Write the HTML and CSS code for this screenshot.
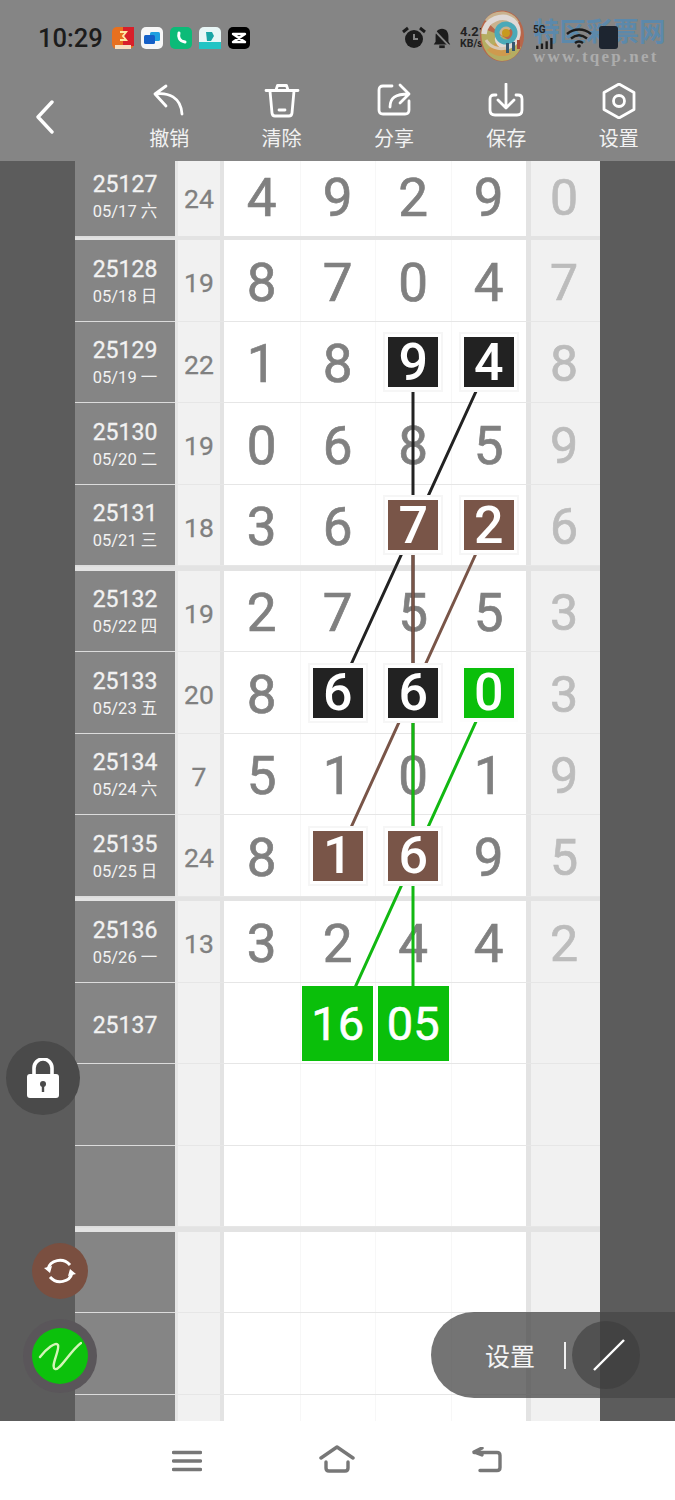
FILE: index.html
```html
<!DOCTYPE html>
<html lang="zh">
<head>
<meta charset="utf-8">
<title>走势图</title>
<link rel="stylesheet" href="styles.css">
</head>
<body>
<div class="screen">
  <header class="header">
    <div class="status">
      <span class="time">10:29</span>
      <div class="apps">
        <svg class="app" viewBox="0 0 22 22"><rect width="22" height="22" rx="5" fill="#e8701e"/><rect x="11" width="11" height="19" fill="#d81f2a"/><rect x="3" y="18" width="16" height="4" fill="#f7e0c0"/><path d="M8 5h6l-3 4 3 4H8" fill="none" stroke="#ffe9a0" stroke-width="2"/></svg>
        <svg class="app" viewBox="0 0 22 22"><rect width="22" height="22" rx="5" fill="#f7f7f7"/><rect x="9" y="5" width="10" height="9" rx="1.5" fill="#1fa0e0"/><rect x="3" y="8" width="11" height="9" rx="1.5" fill="#1560c8"/></svg>
        <svg class="app" viewBox="0 0 22 22"><rect width="22" height="22" rx="5" fill="#0cbb78"/><path d="M9 6c-1 4 0 8 6 9" fill="none" stroke="#fff" stroke-width="3" stroke-linecap="round"/></svg>
        <svg class="app" viewBox="0 0 22 22"><rect width="22" height="22" rx="5" fill="#e8f6f6"/><rect y="15" width="22" height="7" fill="#22c4c4"/><path d="M7 5h6l2 4-3 5H8z" fill="#1aa5a5"/></svg>
        <svg class="app" viewBox="0 0 22 22"><rect width="22" height="22" rx="5" fill="#000"/><path d="M5 7l12 8H5l12-8z" fill="none" stroke="#fff" stroke-width="2.4" stroke-linejoin="round"/></svg>
      </div>
      <div class="sys">
        <svg class="sys-alarm" viewBox="0 0 24 24"><circle cx="12" cy="13" r="9" fill="#1c1c1c"/><path d="M1 6l5-4M23 6l-5-4" stroke="#1c1c1c" stroke-width="3"/><path d="M12 8v5h4" fill="none" stroke="#858585" stroke-width="2"/></svg>
        <svg class="sys-bell" viewBox="0 0 24 24"><path d="M12 2c5 0 7 4 7 8v6l2 3H3l2-3v-6c0-4 2-8 7-8z" fill="#1c1c1c"/><rect x="9" y="20" width="6" height="3" fill="#1c1c1c"/><path d="M3 3l18 19" stroke="#858585" stroke-width="2"/></svg>
        <span class="speed"><b>4.21</b><small>KB/s</small></span>
        <span class="net"><small>5G</small>
          <svg class="signal" viewBox="0 0 26 14"><path d="M1 10h3v4H1zM7 7h3v7H7zM13 4h3v10h-3zM19 0h3v14h-3z" fill="#1c1c1c"/></svg>
        </span>
        <svg class="wifi" viewBox="0 0 26 20"><path d="M1 6c7-6 17-6 24 0M5 10.500c5-4 11-4 16 0M9 15c2.500-2 5.500-2 8 0" fill="none" stroke="#1c1c1c" stroke-width="2.400"/><circle cx="13" cy="18" r="1.800" fill="#1c1c1c"/></svg>
        <span class="battery"></span>
      </div>
    </div>
    <nav class="toolbar">
      <a class="back"><svg viewBox="0 0 20 34" class="back-icon"><path d="M17 2L3 17l14 15" fill="none" stroke="#fff" stroke-width="3.400" stroke-linecap="round" stroke-linejoin="round"/></svg></a>
      <a class="tool">
        <svg class="tool-icon" viewBox="0 0 36 36"><path d="M15 3L4 11l11 12M4 11c13-2 26 3 27 20" /></svg>
        <span>撤销</span>
      </a>
      <a class="tool">
        <svg class="tool-icon" viewBox="0 0 36 36"><path d="M2 7.500h32M12 7l1.500-4.500h9L24 7M6 8l2 22q.3 3 3 3h14q2.700 0 3-3l2-22M15 27h6"/></svg>
        <span>清除</span>
      </a>
      <a class="tool">
        <svg class="tool-icon" viewBox="0 0 36 36"><path d="M16 3H7Q3 3 3 7v20q0 4 4 4h22q4 0 4-4v-9M14 24c0-9 5-13 19-13M24 2l9 9-9 9"/></svg>
        <span>分享</span>
      </a>
      <a class="tool">
        <svg class="tool-icon" viewBox="0 0 36 36"><path d="M8 12H6q-4 0-4 4v11q0 5 5 5h22q5 0 5-5V16q0-4-4-4h-2M18 1v23M10 17l8 8 8-8"/></svg>
        <span>保存</span>
      </a>
      <a class="tool">
        <svg class="tool-icon" viewBox="0 0 36 36"><path d="M18 1l15 8.500v17L18 35 3 26.500v-17z"/><circle cx="18" cy="18" r="5.500"/></svg>
        <span>设置</span>
      </a>
    </nav>
    <div class="watermark">
      <svg class="wm-logo" viewBox="0 0 46 52">
        <ellipse cx="23" cy="26" rx="22" ry="25.500" fill="#b8664a"/>
        <path d="M6 10C14-2 34-1 40 12L23 26z" fill="#c9b28e"/>
        <path d="M3 18C0 34 8 50 23 51c9 0 16-6 19-14L23 26z" fill="#b5ad62"/>
        <path d="M8 40c6 6 16 8 24 4L23 28z" fill="#cf9a4e"/>
        <path d="M5 24C6 9 24 3 34 11c8 7 6 22-4 25-8 2-14-5-10-11" fill="none" stroke="#dfd9d6" stroke-width="5.500"/>
        <path d="M7 30c4 7 12 10 20 8" fill="none" stroke="#d8c8b4" stroke-width="3"/>
        <circle cx="27" cy="23" r="9" fill="none" stroke="#4aa9b8" stroke-width="5"/>
        <circle cx="27" cy="23" r="4" fill="#c79a1e"/>
        <path d="M27 33h3v10h-3zM33 32h3v9h-3z" fill="#37566f"/>
        <path d="M38 30h3v9h-3z" fill="#a84a3a"/>
      </svg>
      <div class="wm-text">
        <span class="wm-name">特区彩票网</span>
        <span class="wm-url">www.tqep.net</span>
      </div>
    </div>
  </header>

  <main class="main">
    <div class="gutter"></div>
    <div class="board">
      <div class="group">
        <div class="row row-partial">
          <div class="issue"><b>25127</b><small>05/17 六</small></div><div class="sum">24</div><div class="sep"></div>
          <div class="cell">4</div><div class="cell">9</div><div class="cell">2</div><div class="cell">9</div><div class="sep sep-r"></div><div class="last">0</div>
        </div>
      </div>
      <div class="group">
        <div class="row">
          <div class="issue"><b>25128</b><small>05/18 日</small></div><div class="sum">19</div><div class="sep"></div>
          <div class="cell">8</div><div class="cell">7</div><div class="cell">0</div><div class="cell">4</div><div class="sep sep-r"></div><div class="last">7</div>
        </div>
        <div class="row">
          <div class="issue"><b>25129</b><small>05/19 一</small></div><div class="sum">22</div><div class="sep"></div>
          <div class="cell">1</div><div class="cell">8</div><div class="cell"><span class="tile black">9</span></div><div class="cell"><span class="tile black">4</span></div><div class="sep sep-r"></div><div class="last">8</div>
        </div>
        <div class="row">
          <div class="issue"><b>25130</b><small>05/20 二</small></div><div class="sum">19</div><div class="sep"></div>
          <div class="cell">0</div><div class="cell">6</div><div class="cell">8</div><div class="cell">5</div><div class="sep sep-r"></div><div class="last">9</div>
        </div>
        <div class="row">
          <div class="issue"><b>25131</b><small>05/21 三</small></div><div class="sum">18</div><div class="sep"></div>
          <div class="cell">3</div><div class="cell">6</div><div class="cell"><span class="tile brown">7</span></div><div class="cell"><span class="tile brown">2</span></div><div class="sep sep-r"></div><div class="last">6</div>
        </div>
      </div>
      <div class="group">
        <div class="row">
          <div class="issue"><b>25132</b><small>05/22 四</small></div><div class="sum">19</div><div class="sep"></div>
          <div class="cell">2</div><div class="cell">7</div><div class="cell">5</div><div class="cell">5</div><div class="sep sep-r"></div><div class="last">3</div>
        </div>
        <div class="row">
          <div class="issue"><b>25133</b><small>05/23 五</small></div><div class="sum">20</div><div class="sep"></div>
          <div class="cell">8</div><div class="cell"><span class="tile black">6</span></div><div class="cell"><span class="tile black">6</span></div><div class="cell"><span class="tile green">0</span></div><div class="sep sep-r"></div><div class="last">3</div>
        </div>
        <div class="row">
          <div class="issue"><b>25134</b><small>05/24 六</small></div><div class="sum">7</div><div class="sep"></div>
          <div class="cell">5</div><div class="cell">1</div><div class="cell">0</div><div class="cell">1</div><div class="sep sep-r"></div><div class="last">9</div>
        </div>
        <div class="row">
          <div class="issue"><b>25135</b><small>05/25 日</small></div><div class="sum">24</div><div class="sep"></div>
          <div class="cell">8</div><div class="cell"><span class="tile brown">1</span></div><div class="cell"><span class="tile brown">6</span></div><div class="cell">9</div><div class="sep sep-r"></div><div class="last">5</div>
        </div>
      </div>
      <div class="group">
        <div class="row">
          <div class="issue"><b>25136</b><small>05/26 一</small></div><div class="sum">13</div><div class="sep"></div>
          <div class="cell">3</div><div class="cell">2</div><div class="cell">4</div><div class="cell">4</div><div class="sep sep-r"></div><div class="last">2</div>
        </div>
        <div class="row">
          <div class="issue"><b>25137</b></div><div class="sum"></div><div class="sep"></div>
          <div class="cell"></div><div class="cell"><span class="pick">16</span></div><div class="cell"><span class="pick">05</span></div><div class="cell"></div><div class="sep sep-r"></div><div class="last"></div>
        </div>
        <div class="row">
          <div class="issue"></div><div class="sum"></div><div class="sep"></div>
          <div class="cell"></div><div class="cell"></div><div class="cell"></div><div class="cell"></div><div class="sep sep-r"></div><div class="last"></div>
        </div>
        <div class="row">
          <div class="issue"></div><div class="sum"></div><div class="sep"></div>
          <div class="cell"></div><div class="cell"></div><div class="cell"></div><div class="cell"></div><div class="sep sep-r"></div><div class="last"></div>
        </div>
      </div>
      <div class="group">
        <div class="row">
          <div class="issue"></div><div class="sum"></div><div class="sep"></div>
          <div class="cell"></div><div class="cell"></div><div class="cell"></div><div class="cell"></div><div class="sep sep-r"></div><div class="last"></div>
        </div>
        <div class="row">
          <div class="issue"></div><div class="sum"></div><div class="sep"></div>
          <div class="cell"></div><div class="cell"></div><div class="cell"></div><div class="cell"></div><div class="sep sep-r"></div><div class="last"></div>
        </div>
        <div class="row">
          <div class="issue"></div><div class="sum"></div><div class="sep"></div>
          <div class="cell"></div><div class="cell"></div><div class="cell"></div><div class="cell"></div><div class="sep sep-r"></div><div class="last"></div>
        </div>
      </div>
    </div>
    <div class="gutter"></div>

    <svg class="links" viewBox="0 161 675 1260">
      <g stroke="#222" stroke-width="3"><path d="M413 363V693M489 363L338 693"/></g>
      <g stroke="#795548" stroke-width="3"><path d="M413 525V856M489 525L338 856"/></g>
      <g stroke="#12b812" stroke-width="3"><path d="M413 693V1025M489 693L338 1025"/></g>
    </svg>

    <button class="fab fab-lock"><svg class="lock-icon" viewBox="0 0 34 40"><path d="M8 17V10a9 9 0 0 1 18 0v7" fill="none" stroke="#fff" stroke-width="3.600"/><rect x="1" y="16" width="32" height="24" rx="3" fill="#fff"/><circle cx="17" cy="26" r="3" fill="#4a4a4a"/><rect x="15.800" y="27" width="2.400" height="7" fill="#4a4a4a"/></svg></button>
    <button class="fab fab-swap"><svg class="swap-icon" viewBox="0 0 32 28"><path d="M4 12C6 3 19 0 26 8M28 16c-2 9-15 12-22 4" fill="none" stroke="#fff" stroke-width="3"/><path d="M0 11l8-2-2 7zM32 17l-8 2 2-7z" fill="#fff"/></svg></button>
    <button class="fab fab-pen"><span class="pen-dot"><svg class="pen-icon" viewBox="0 0 44 34"><path d="M2 18C8 10 18 2 20 6c2 5-8 22-3 24C22 32 32 12 43 4" fill="none" stroke="#d4f5b8" stroke-width="2.400" stroke-linecap="round"/></svg></span></button>
    <div class="pill">
      <span class="pill-label">设置</span>
      <i class="pill-div"></i>
      <span class="pill-tool"><svg class="slash-icon" viewBox="0 0 32 32"><path d="M1 31L31 1" stroke="#fff" stroke-width="2.400"/></svg></span>
    </div>
  </main>

  <footer class="nav">
    <svg class="nav-menu" viewBox="0 0 30 22"><path d="M1.500 2.500h27M1.500 11h27M1.500 19.500h27"/></svg>
    <svg class="nav-home" viewBox="0 0 36 28"><path d="M2 13L18 2l16 11M7 17v6q0 3 3 3h16q3 0 3-3v-6"/></svg>
    <svg class="nav-back" viewBox="0 0 32 26"><path d="M11 1L3 5l8 3M3 5.500h23q3 0 3 3v12q0 3-3 3H9"/></svg>
  </footer>
</div>
</body>
</html>
```
FILE: styles.css
```css
* { box-sizing: border-box; }
html, body { margin: 0; padding: 0; }
body { font-family: Roboto, "Noto Sans CJK SC", sans-serif; background: #fff; }
.screen { position: relative; width: 675px; height: 1500px; display: flex; flex-direction: column; overflow: hidden; }

/* header */
.header { position: relative; height: 161px; flex: none; background: #858585; display: flex; flex-direction: column; }
.status { height: 75px; display: flex; align-items: center; padding-left: 38px; }
.time { font-size: 25.500px; font-weight: 500; color: #1c1c1c; width: 74px; }
.apps { display: flex; gap: 7px; }
.app { width: 22px; height: 22px; display: block; }
.sys { display: flex; align-items: center; margin-left: 152px; }
.sys-alarm { width: 24px; height: 24px; }
.sys-bell { width: 22px; height: 24px; margin-left: 5px; }
.speed { display: flex; flex-direction: column; align-items: flex-start; margin-left: 7px; width: 73px; color: #222; line-height: 12px; }
.speed b { font-size: 13px; }
.speed small { font-size: 10.500px; font-weight: 700; }
.net { position: relative; z-index: 2; display: flex; flex-direction: column; gap: 5px; width: 33px; color: #222; }
.net small { font-size: 10px; font-weight: 700; line-height: 7px; }
.signal { width: 25px; height: 11px; display: block; }
.wifi { position: relative; z-index: 2; width: 26px; height: 20px; }
.battery { position: relative; z-index: 2; width: 19px; height: 23px; margin-left: 7px; background: #1d2530; border-radius: 3px; }

.toolbar { flex: 1; display: flex; align-items: flex-start; padding-top: 8px; }
.back { width: 113px; padding: 17px 0 0 35px; }
.back-icon { width: 20px; height: 34px; display: block; }
.tool { width: 112.500px; display: flex; flex-direction: column; align-items: center; color: #f2f2f2; font-size: 20px; line-height: 28px; font-family: "Noto Sans CJK SC", sans-serif; }
.tool-icon { width: 36px; height: 36px; display: block; fill: none; stroke: #fff; stroke-width: 2.800; stroke-linecap: round; stroke-linejoin: round; margin-bottom: 5px; }

.watermark { position: absolute; z-index: 1; left: 479px; top: 10px; display: flex; gap: 8px; align-items: flex-start; }
.wm-logo { width: 46px; height: 52px; display: block; }
.wm-text { display: flex; flex-direction: column; margin-top: 4px; }
.wm-name { font-family: "Noto Sans CJK SC", sans-serif; font-weight: 700; font-size: 26.500px; line-height: 32px; color: #5c89ab; white-space: nowrap; }
.wm-url { font-family: "Liberation Serif", serif; font-weight: 700; font-size: 17px; line-height: 16px; margin-top: 3px; color: #acacac; letter-spacing: 2.200px; white-space: nowrap; }

/* board */
.main { position: relative; flex: none; height: 1260px; display: flex; overflow: hidden; background: #5c5c5c; }
.gutter { width: 75px; flex: none; }
.board { width: 525px; flex: none; background: #e3e3e3; display: flex; flex-direction: column; gap: 4.500px; overflow: hidden; }
.row { height: 81.500px; display: grid; grid-template-columns: 100px 45px 4px repeat(4, 75.500px) 5px 69px; border-bottom: 1.500px solid #e6e6e6; }
.row > .issue, .row > .sum, .row > .cell, .row > .last { padding-top: 5px; }
.row-partial { height: 74.500px; border-bottom: 0; }
.row-partial > .issue, .row-partial > .sum, .row-partial > .cell, .row-partial > .last { padding-top: 0; }
.issue { background: #858585; color: #f2f2f2; display: flex; flex-direction: column; align-items: center; justify-content: center; box-shadow: 0 1.500px 0 #dcdcdc; }
.issue b { font-weight: 400; font-size: 23px; line-height: 27px; -webkit-text-stroke: .3px #f2f2f2; }
.issue small { font-size: 16.500px; line-height: 27px; }
.sum { background: #f1f1f1; border-left: 3px solid #e6e6e6; display: flex; align-items: center; justify-content: center; color: #808080; font-size: 26.500px; font-weight: 400; -webkit-text-stroke: .3px #808080; }
.sep { background: #e3e3e3; }
.cell { background: #fff; border-left: 1.500px solid #f7f7f7; display: flex; align-items: center; justify-content: center; color: #808080; font-size: 53px; font-weight: 400; -webkit-text-stroke: .7px #808080; }
.sep + .cell { border-left: 0; }
.sep-r { background: #e3e3e3; }
.last { background: #f1f1f1; display: flex; align-items: center; justify-content: center; color: #bcbcbc; font-size: 50px; font-weight: 400; padding-right: 3px; -webkit-text-stroke: .7px #bcbcbc; }
.tile { position: relative; z-index: 2; width: 50px; height: 50px; margin-top: -4px; display: flex; align-items: center; justify-content: center; color: #fff; font-size: 52px; font-weight: 500; -webkit-text-stroke: 0; box-shadow: 0 0 0 3px #fff, 0 0 0 5px #f6f6f6; }
.black { background: #222; }
.brown { background: #795548; }
.green { background: #0abf0a; box-shadow: 0 0 0 4px #fdfdfd; }
.pick { position: relative; z-index: 2; width: 71px; height: 75px; margin-top: -3px; background: #0abf0a; color: #fff; font-size: 47px; font-weight: 400; -webkit-text-stroke: .6px #fff; display: flex; align-items: center; justify-content: center; }
.links { position: absolute; left: 0; top: 0; width: 675px; height: 1260px; z-index: 1; pointer-events: none; fill: none; }

/* floating controls */
.fab { position: absolute; z-index: 3; border: 0; padding: 0; border-radius: 50%; display: flex; align-items: center; justify-content: center; }
.fab-lock { left: 6px; top: 880px; width: 74px; height: 74px; background: #4a4a4a; }
.lock-icon { width: 34px; height: 40px; }
.fab-swap { left: 32px; top: 1082px; width: 56px; height: 56px; background: #7a4f40; }
.swap-icon { width: 32px; height: 28px; }
.fab-pen { left: 23px; top: 1158px; width: 74px; height: 74px; background: #5a565a; }
.pen-dot { width: 56px; height: 56px; border-radius: 50%; background: #0cc10c; display: flex; align-items: center; justify-content: center; }
.pen-icon { width: 44px; height: 34px; }
.pill { position: absolute; z-index: 3; left: 431px; top: 1151px; width: 260px; height: 86px; border-radius: 43px 0 0 43px; background: rgba(72, 72, 72, .755); display: flex; align-items: center; padding-left: 54px; }
.pill-label { font-family: "Noto Sans CJK SC", sans-serif; font-size: 25px; color: #f5f5f5; }
.pill-div { width: 2px; height: 27px; background: #f0f0f0; margin-left: 29px; }
.pill-tool { width: 68px; height: 68px; border-radius: 50%; background: rgba(60, 60, 60, .6); margin-left: 6px; padding-left: 5px; display: flex; align-items: center; justify-content: center; }
.slash-icon { width: 32px; height: 32px; }

/* system nav */
.nav { flex: 1; background: #fff; display: flex; align-items: flex-start; padding: 24px 0 0 172px; }
.nav svg { fill: none; stroke: #777; stroke-width: 3.400; stroke-linecap: round; stroke-linejoin: round; display: block; }
.nav-menu { width: 30px; height: 22px; margin-top: 5px; }
.nav-home { width: 36px; height: 28px; margin-left: 117px; }
.nav-back { width: 32px; height: 26px; margin-left: 116px; margin-top: 2px; }
```
